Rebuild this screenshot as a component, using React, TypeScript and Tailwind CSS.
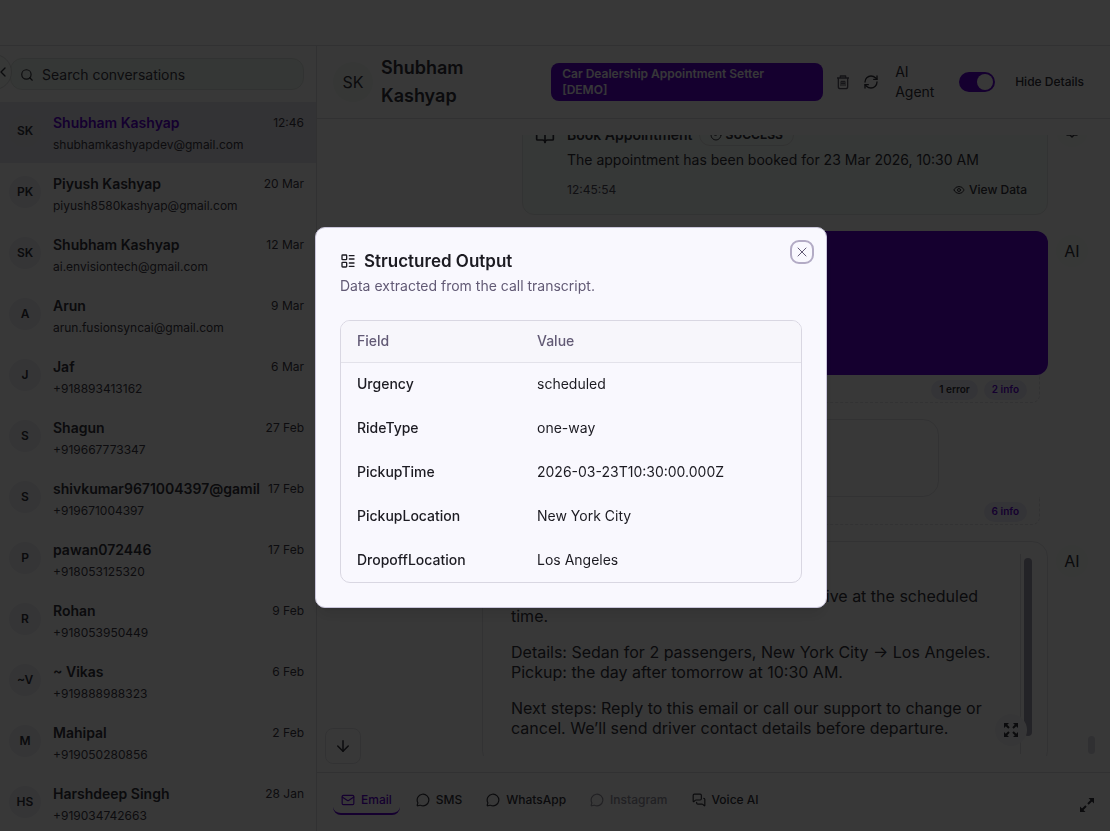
import type { ReactNode } from "react";
import {
  ArrowDown,
  BookOpen,
  ChevronLeft,
  CircleCheck,
  Eye,
  LayoutList,
  Mail,
  MessageCircle,
  MessagesSquare,
  RefreshCw,
  Search,
  X,
} from "lucide-react";
import clsx from "clsx";

type Conversation = {
  initials: string;
  name: string;
  contact: string;
  date: string;
  active?: boolean;
};

const conversations: Conversation[] = [
  { initials: "SK", name: "Shubham Kashyap", contact: "shubhamkashyapdev@gmail.com", date: "12:46", active: true },
  { initials: "PK", name: "Piyush Kashyap", contact: "piyush8580kashyap@gmail.com", date: "20 Mar" },
  { initials: "SK", name: "Shubham Kashyap", contact: "ai.envisiontech@gmail.com", date: "12 Mar" },
  { initials: "A", name: "Arun", contact: "arun.fusionsyncai@gmail.com", date: "9 Mar" },
  { initials: "J", name: "Jaf", contact: "+918893413162", date: "6 Mar" },
  { initials: "S", name: "Shagun", contact: "+919667773347", date: "27 Feb" },
  { initials: "S", name: "shivkumar9671004397@gamil", contact: "+919671004397", date: "17 Feb" },
  { initials: "P", name: "pawan072446", contact: "+918053125320", date: "17 Feb" },
  { initials: "R", name: "Rohan", contact: "+918053950449", date: "9 Feb" },
  { initials: "~V", name: "~ Vikas", contact: "+919888988323", date: "6 Feb" },
  { initials: "M", name: "Mahipal", contact: "+919050280856", date: "2 Feb" },
  { initials: "HS", name: "Harshdeep Singh", contact: "+919034742663", date: "28 Jan" },
];

const fields = [
  { field: "Urgency", value: "scheduled" },
  { field: "RideType", value: "one-way" },
  { field: "PickupTime", value: "2026-03-23T10:30:00.000Z" },
  { field: "PickupLocation", value: "New York City" },
  { field: "DropoffLocation", value: "Los Angeles" },
];

function TrashIcon() {
  return (
    <svg viewBox="0 0 24 24" className="h-4 w-4" fill="none" stroke="currentColor" strokeWidth="2" strokeLinejoin="round">
      <path d="M3 6h18M8 6V3h8v3M5 6v13a3 3 0 0 0 3 3h8a3 3 0 0 0 3-3V6" />
      <path d="M9 18v-7h6v7M9 14h6M12 11v7" strokeWidth="1.5" />
    </svg>
  );
}

function ExpandDiagonalIcon() {
  return (
    <svg viewBox="0 0 16 16" className="h-4 w-4" fill="none" stroke="currentColor" strokeWidth="2">
      <path d="M9 7l4-4M7 9l-4 4" />
      <path d="M9.500 1H15v5.500zM6.500 15H1V9.500z" fill="currentColor" stroke="none" />
    </svg>
  );
}

function ExpandCornersIcon() {
  return (
    <svg viewBox="0 0 16 16" className="h-4 w-4" fill="none" stroke="currentColor" strokeWidth="2">
      <path d="M2 2l4 4M14 2l-4 4M2 14l4-4M14 14l-4-4" />
      <path d="M1 1h5L1 6zM15 1h-5l5 5zM1 15h5l-5-5zM15 15h-5l5-5z" fill="currentColor" stroke="none" />
    </svg>
  );
}

function BotIcon() {
  return (
    <svg viewBox="0 0 16 16" className="h-4 w-4" fill="none" stroke="currentColor" strokeWidth="1.500">
      <path d="M3 3h10v9h-3l-2 2-2-2H3z" strokeLinejoin="round" />
    </svg>
  );
}

function SenderAvatar({ children }: { children: ReactNode }) {
  return (
    <div className="mt-1 flex h-8 w-8 shrink-0 items-center justify-center rounded-full bg-[#f8fcf9] text-base">
      {children}
    </div>
  );
}

function LogBadge({ children, info }: { children: ReactNode; info?: boolean }) {
  return (
    <span
      className={clsx(
        "flex h-5 items-center rounded-full bg-[#eeedf8] px-2 text-[10px] font-semibold",
        info ? "text-[#5f00d6]" : "text-[#303038]"
      )}
    >
      {children}
    </span>
  );
}

function LogStrip({ children }: { children: ReactNode }) {
  return (
    <div className="mr-2 flex h-7 w-[548px] items-center justify-end gap-1.5 self-end rounded-b-lg border border-t-0 border-dashed border-[#e2e2e6] pr-3 pt-0.5">
      {children}
    </div>
  );
}

function ConversationRow({ initials, name, contact, date, active }: Conversation) {
  return (
    <li>
      <button
        type="button"
        className={clsx("flex h-[61px] w-full items-center gap-3 pl-[9px] pr-3 text-left", active && "bg-[#e9e8ef]")}
      >
        <span
          className={clsx(
            "-mt-1 flex h-8 w-8 shrink-0 items-center justify-center rounded-full text-xs font-semibold",
            active ? "bg-[#e6e6ec]" : "bg-[#f0f0f6]"
          )}
        >
          {initials}
        </span>
        <span className="flex min-w-0 flex-1 flex-col gap-1">
          <span className="flex items-center gap-2">
            <span
              className={clsx(
                "flex-1 overflow-hidden whitespace-nowrap text-sm font-semibold leading-5",
                active && "text-[#5f00d6]"
              )}
            >
              {name}
            </span>
            <span className="text-xs text-[#3c3a46]">{date}</span>
          </span>
          <span className="truncate text-xs leading-4 text-[#3c3a46]">{contact}</span>
        </span>
      </button>
    </li>
  );
}

function Sidebar() {
  return (
    <aside className="relative flex w-[317px] shrink-0 flex-col border-r border-[#dedee2]">
      <div className="py-3 pl-2.5 pr-3">
        <label className="flex h-8 items-center gap-2 rounded-xl border border-[#e0e5e2] bg-[#f1f9f4] px-[9px] pt-0.5">
          <Search className="h-3.5 w-3.5" />
          <input
            type="search"
            aria-label="Search conversations"
            placeholder="Search conversations"
            className="min-w-0 flex-1 bg-transparent text-sm outline-none placeholder:text-[#3c3a46]"
          />
        </label>
      </div>
      {/* Collapse handle, half outside the window */}
      <button
        type="button"
        aria-label="Collapse sidebar"
        className="absolute -left-6 top-2 flex h-9 w-9 items-center justify-end rounded-full border border-[#d6dad8] bg-[#fafdfb]"
      >
        <ChevronLeft className="h-4 w-4" />
      </button>
      <ul className="min-h-0 flex-1 overflow-hidden">
        {conversations.map((item) => (
          <ConversationRow key={item.contact} {...item} />
        ))}
      </ul>
    </aside>
  );
}

function ChatHeader() {
  return (
    <header className="flex h-[73px] shrink-0 items-center border-b border-[#dedee2] pl-4 pr-[26px]">
      <div className="flex h-10 w-10 shrink-0 items-center justify-center rounded-full bg-[#f4faf6] text-base">SK</div>
      <h1 className="ml-2 w-24 text-lg font-semibold leading-7">Shubham Kashyap</h1>
      <div className="ml-auto w-[272px] rounded-lg bg-[#5f00d6] px-[11px] py-[3px] text-xs font-semibold leading-4 text-[#f8f8ff]">
        Car Dealership Appointment Setter [DEMO]
      </div>
      <button type="button" aria-label="Delete" className="ml-3 text-[#5a5866]">
        <TrashIcon />
      </button>
      <button type="button" aria-label="Refresh" className="ml-3">
        <RefreshCw className="h-4 w-4" />
      </button>
      <label htmlFor="ai-agent" className="ml-4 w-12 text-sm leading-5">
        AI Agent
      </label>
      <span className="relative ml-4 flex h-5 w-9 shrink-0">
        <input
          id="ai-agent"
          type="checkbox"
          role="switch"
          defaultChecked
          className="h-5 w-9 appearance-none rounded-full bg-[#5f00d6]"
        />
        <span className="pointer-events-none absolute right-0.5 top-0.5 h-4 w-4 rounded-full bg-white" />
      </span>
      <button type="button" className="ml-5 whitespace-nowrap text-xs font-medium">
        Hide Details
      </button>
    </header>
  );
}

function Messages() {
  return (
    <div className="relative min-h-0 flex-1 py-4">
      <div className="h-full overflow-hidden">
        <div className="-mt-6 flex flex-col pl-4 pr-[22px]">
          <div className="flex justify-end gap-2">
            <article className="w-[526px] rounded-xl border border-[#e4e8e6] bg-[#f7fdf9] px-3 pb-3.5 pt-[13px]">
              <div className="flex h-5 items-center">
                <BookOpen className="h-5 w-5" />
                <h2 className="ml-3 text-sm font-semibold">Book Appointment</h2>
                <span className="ml-1.5 flex h-[22px] items-center gap-1 rounded-full border border-[#e0e3e1] px-2.5 text-xs font-bold">
                  <CircleCheck className="h-3 w-3" />
                  SUCCESS
                </span>
              </div>
              <div className="ml-8 mt-[3px] flex flex-col gap-2 pr-2">
                <p className="text-sm leading-6 text-[#303038]">
                  The appointment has been booked for 23 Mar 2026, 10:30 AM
                </p>
                <div className="flex h-5 items-center justify-between text-xs">
                  <time className="text-[#4c4a58]">12:45:54</time>
                  <button type="button" className="flex items-center gap-1 font-medium">
                    <Eye className="h-3 w-3" />
                    View Data
                  </button>
                </div>
              </div>
            </article>
            <SenderAvatar>
              <BotIcon />
            </SenderAvatar>
          </div>

          <div className="mt-4 flex justify-end gap-2">
            <div className="h-36 w-[566px] rounded-xl bg-[#5f00d6]" />
            <SenderAvatar>AI</SenderAvatar>
          </div>
          <div className="flex flex-col pr-10">
            <LogStrip>
              <LogBadge>1 error</LogBadge>
              <LogBadge info>2 info</LogBadge>
            </LogStrip>
          </div>

          <div className="mt-4 flex pr-[149px]">
            <div className="ml-10 h-[78px] flex-1 rounded-2xl border border-[#e4e4e8]" />
          </div>
          <div className="flex flex-col pr-10">
            <LogStrip>
              <LogBadge info>6 info</LogBadge>
            </LogStrip>
          </div>

          <div className="mt-4 flex justify-end gap-2">
            <article className="flex w-[566px] rounded-2xl border border-[#e4e4e8] p-3">
              <div className="flex-1 border-r border-[#dedee2] py-4 pl-4 pr-2 text-base leading-5">
                <p className="pt-4">
                  Your ride is confirmed. Your driver will arrive at the scheduled
                  <br />
                  time.
                </p>
                <p className="mt-4">
                  Details: Sedan for 2 passengers, New York City → Los Angeles.
                  <br />
                  Pickup: the day after tomorrow at 10:30 AM.
                </p>
                <p className="mt-4">
                  Next steps: Reply to this email or call our support to change or
                  <br />
                  cancel. We’ll send driver contact details before departure.
                </p>
              </div>
              <div className="ml-[3px] mr-[3px] mt-1 h-[178px] w-2 rounded-full bg-[#a09eb0]" />
            </article>
            <SenderAvatar>AI</SenderAvatar>
          </div>
        </div>
      </div>

      {/* Floating controls */}
      <button
        type="button"
        aria-label="Scroll to bottom"
        className="absolute bottom-2 left-2 flex h-9 w-9 items-center justify-center rounded-lg border border-[#e4e4e8] bg-white"
      >
        <ArrowDown className="h-[18px] w-[18px]" />
      </button>
      <button
        type="button"
        aria-label="Expand email"
        className="absolute bottom-[26px] right-[83px] flex h-8 w-8 items-center justify-center rounded-full bg-[#f6f6f8]"
      >
        <ExpandCornersIcon />
      </button>
      <div className="absolute bottom-[18px] right-[15px] h-[18px] w-[7px] rounded-full bg-[#dad9e2]" />
    </div>
  );
}

type ChannelTabProps = {
  icon: ReactNode;
  children: string;
  active?: boolean;
  disabled?: boolean;
};

function ChannelTab({ icon, children, active, disabled }: ChannelTabProps) {
  return (
    <button
      type="button"
      disabled={disabled}
      className={clsx(
        "flex h-[30px] items-center gap-1.5 rounded-lg border-b-2 px-2 pt-0.5 text-xs font-medium",
        active ? "border-[#5f00d6] text-[#5f00d6]" : "border-transparent",
        disabled && "text-[#96949f]"
      )}
    >
      {icon}
      {children}
    </button>
  );
}

function ChannelBar() {
  return (
    <footer className="flex shrink-0 items-start gap-2 border-t border-[#dedee2] pb-4 pl-4 pr-[15px] pt-3">
      <ChannelTab icon={<Mail className="h-3.5 w-3.5" />} active>
        Email
      </ChannelTab>
      <ChannelTab icon={<MessageCircle className="h-3.5 w-3.5" />}>SMS</ChannelTab>
      <ChannelTab icon={<MessageCircle className="h-3.5 w-3.5" />}>WhatsApp</ChannelTab>
      <ChannelTab icon={<MessageCircle className="h-3.5 w-3.5" />} disabled>
        Instagram
      </ChannelTab>
      <ChannelTab icon={<MessagesSquare className="h-3.5 w-3.5" />}>Voice AI</ChannelTab>
      <button type="button" aria-label="Expand composer" className="ml-auto mt-3">
        <ExpandDiagonalIcon />
      </button>
    </footer>
  );
}

function StructuredOutputDialog() {
  return (
    <div className="fixed inset-0 flex items-center justify-center bg-black/78 pl-8 pt-1">
      <div
        role="dialog"
        aria-modal="true"
        aria-labelledby="dialog-title"
        className="relative w-full max-w-lg rounded-[10px] border border-[#c9c5da] bg-[#f9f8fe] p-6 shadow-lg"
      >
        <h2 id="dialog-title" className="flex items-center gap-2 text-[17px] font-semibold leading-[18px] text-[#1c1b22]">
          <LayoutList className="h-4 w-4" />
          Structured Output
        </h2>
        <p className="mt-1.5 text-sm leading-5 text-[#625a75]">Data extracted from the call transcript.</p>

        <div className="mt-6 overflow-hidden rounded-[10px] border border-[#d9d7e2]">
          <table className="w-full table-fixed text-left text-sm">
            <thead>
              <tr className="h-[41px] border-b border-[#e3e2ea] bg-[#f7f6fb] text-[#625a75]">
                <th className="w-[180px] px-4 font-medium">Field</th>
                <th className="px-4 font-medium">Value</th>
              </tr>
            </thead>
            <tbody>
              {fields.map(({ field, value }) => (
                <tr key={field} className="h-11 text-[#1c1b22]">
                  <td className="px-4 font-medium">{field}</td>
                  <td className="px-4">{value}</td>
                </tr>
              ))}
            </tbody>
          </table>
        </div>

        <button
          type="button"
          aria-label="Close"
          className="absolute right-3 top-3 flex h-6 w-6 items-center justify-center rounded-[9px] border-2 border-[#b3abc5] text-[#625a75]"
        >
          <X className="h-4 w-4" strokeWidth={1.5} />
        </button>
      </div>
    </div>
  );
}

export default function App() {
  return (
    <div className="flex h-screen flex-col overflow-hidden bg-white font-['Inter',sans-serif] text-[#33333b]">
      <div className="h-[46px] shrink-0 border-b border-[#dedee2]" />
      <div className="flex min-h-0 flex-1">
        <Sidebar />
        <main className="flex min-w-0 flex-1 flex-col">
          <ChatHeader />
          <Messages />
          <ChannelBar />
        </main>
      </div>
      <StructuredOutputDialog />
    </div>
  );
}
